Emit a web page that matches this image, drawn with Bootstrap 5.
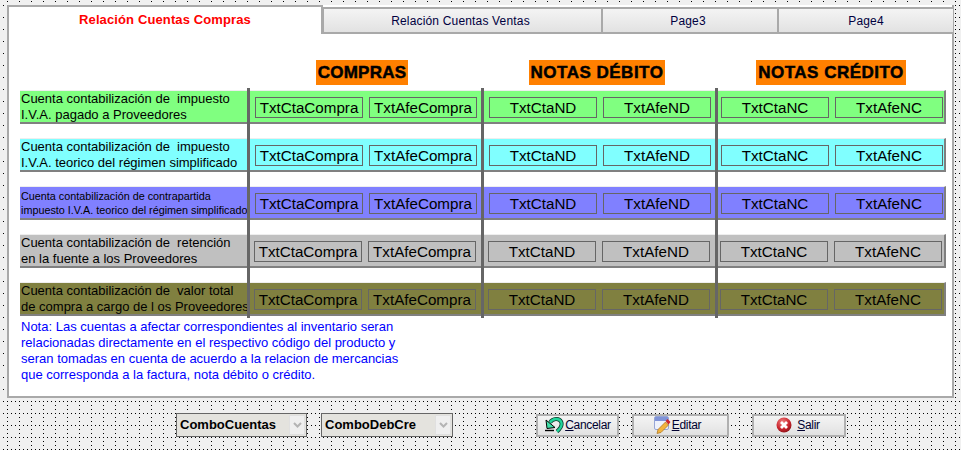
<!DOCTYPE html>
<html lang="es">
<head>
<meta charset="utf-8">
<title>Relación Cuentas</title>
<link href="https://cdn.jsdelivr.net/npm/bootstrap@5.3.0/dist/css/bootstrap.min.css" rel="stylesheet">
<style>
html,body{margin:0;height:450px;overflow:hidden}
body{--d:radial-gradient(circle at .5px .5px,#000 .7px,transparent .7px);width:961px;font-family:"Liberation Sans",Arial,sans-serif;color:#000;background-color:#f0f0f0;
 background-image:var(--d),var(--d),var(--d),var(--d),var(--d);background-size:12px 12px;background-position:3px 5px,7px 5px,11px 5px,7px 1px,7px 9px;padding:5px 7px 0 7px}
.frm{height:393px;width:947px;background:#fff;border:2px solid #a9a9a9;border-top:0;position:relative}
.tabrow{height:29px;margin:0 -2px}
.tb{background:linear-gradient(#f4f4f4,#e2e2e2);margin-top:2px;border:2px solid #a9a9a9;border-left-width:1px;border-right-width:1px;font-size:12px;letter-spacing:.17px;color:#000040}
.tb-on{width:316px;background:#fff;border:2px solid #a9a9a9;border-bottom:0;color:#f00;font-weight:700;font-size:13px;letter-spacing:.12px;padding-top:3px}
.hdrs{margin:26px 0 0 0;height:25px}
.hd{background:#ff8000;font-weight:700;font-size:17px;line-height:25px;padding:0 2px;letter-spacing:.5px;-webkit-text-stroke:.5px #000}
.hd-c{letter-spacing:.25px;padding:0 1.500px}
.gridwrap{position:relative;margin:3px 0 0 11px;width:926px;height:230px;padding-top:2px}
.sep{position:absolute;top:0;width:3px;height:230px;background:#666}
.rw{height:34px;margin-bottom:14px;border-top:1px solid #eee;border-right:2px solid #808080;border-bottom:2px solid #808080;padding-top:1px}
.rw:last-child{margin-bottom:0}
.lbl{width:235px;font-size:13px;line-height:16px;padding-left:1px;white-space:pre;flex:none}
.lbl-sm{font-size:10.8px;line-height:14px}
.lbl-b{width:234px}
.grp{flex:none;gap:6px}
.g1{width:234px}
.g2{width:232px}
.tx{width:108px;height:21px;border:1px solid #666;font-size:15.2px;line-height:19px;text-align:center;white-space:nowrap;overflow:hidden}
.c1{background:#80ff80}.c2{background:#80ffff}.c3{background:#8080ff}.c4{background:silver}.c5{background:#808040}
.nota{color:#00f;font-size:13px;line-height:16px;margin:1px 0 0 12px;white-space:pre}
.bar{height:52px;padding-top:2px}
.cmb{height:24px;border:1px solid #666;background:#e4e3de;font-weight:700;font-size:13px;padding-left:3px;color:#000}
.cmb-a{width:131px;margin-left:169px}
.cmb-b{width:132px;margin-left:14px}
.arr{width:16px;height:20px;margin-right:1px;background:#efefef;border:1px solid #e0e0e0}
.bt{height:23px;background:linear-gradient(#f4f4f4,#e2e2e2);border:2px solid #b0b0b0;font-size:12px;color:#000030;gap:1px;letter-spacing:-.3px}
.b1{width:83px;margin-left:83px}
.b2{width:97px;margin-left:13px;padding-right:6px}
.b3{width:94px;margin-left:23px;padding-right:2px}
</style>
</head>
<body>
<div class="frm">
 <div class="tabrow d-flex">
  <div class="tb-on text-center">Relación Cuentas Compras</div>
  <div class="tb d-flex align-items-center justify-content-center pe-1" style="width:279px">Relación Cuentas Ventas</div>
  <div class="tb d-flex align-items-center justify-content-center pe-1" style="width:176px">Page3</div>
  <div class="tb d-flex align-items-center justify-content-center" style="width:176px">Page4</div>
 </div>
 <div class="hdrs d-flex">
  <div class="d-flex justify-content-center" style="width:469px;padding-left:237px"><span class="hd hd-c">COMPRAS</span></div>
  <div class="d-flex justify-content-center" style="width:238px"><span class="hd">NOTAS DÉBITO</span></div>
  <div class="d-flex justify-content-center" style="width:230px"><span class="hd">NOTAS CRÉDITO</span></div>
 </div>
 <div class="gridwrap">
  <div class="sep" style="left:227px"></div>
  <div class="sep" style="left:461px"></div>
  <div class="sep" style="left:695px"></div>
  <div class="rw d-flex align-items-center c1">
   <div class="lbl">Cuenta contabilización de  impuesto
I.V.A. pagado a Proveedores</div>
   <div class="grp g1 d-flex"><div class="tx">TxtCtaCompra</div><div class="tx">TxtAfeCompra</div></div>
   <div class="grp g2 d-flex"><div class="tx">TxtCtaND</div><div class="tx">TxtAfeND</div></div>
   <div class="grp d-flex"><div class="tx">TxtCtaNC</div><div class="tx">TxtAfeNC</div></div>
  </div>
  <div class="rw d-flex align-items-center c2">
   <div class="lbl">Cuenta contabilización de  impuesto
I.V.A. teorico del régimen simplificado</div>
   <div class="grp g1 d-flex"><div class="tx">TxtCtaCompra</div><div class="tx">TxtAfeCompra</div></div>
   <div class="grp g2 d-flex"><div class="tx">TxtCtaND</div><div class="tx">TxtAfeND</div></div>
   <div class="grp d-flex"><div class="tx">TxtCtaNC</div><div class="tx">TxtAfeNC</div></div>
  </div>
  <div class="rw d-flex align-items-center c3">
   <div class="lbl lbl-sm">Cuenta contabilización de contrapartida
impuesto I.V.A. teorico del régimen simplificado</div>
   <div class="grp g1 d-flex"><div class="tx">TxtCtaCompra</div><div class="tx">TxtAfeCompra</div></div>
   <div class="grp g2 d-flex"><div class="tx">TxtCtaND</div><div class="tx">TxtAfeND</div></div>
   <div class="grp d-flex"><div class="tx">TxtCtaNC</div><div class="tx">TxtAfeNC</div></div>
  </div>
  <div class="rw d-flex align-items-center c4">
   <div class="lbl lbl-b">Cuenta contabilización de  retención
en la fuente a los Proveedores</div>
   <div class="grp g1 d-flex"><div class="tx">TxtCtaCompra</div><div class="tx">TxtAfeCompra</div></div>
   <div class="grp g2 d-flex"><div class="tx">TxtCtaND</div><div class="tx">TxtAfeND</div></div>
   <div class="grp d-flex"><div class="tx">TxtCtaNC</div><div class="tx">TxtAfeNC</div></div>
  </div>
  <div class="rw d-flex align-items-center c5">
   <div class="lbl lbl-b">Cuenta contabilización de  valor total
de compra a cargo de l os Proveedores</div>
   <div class="grp g1 d-flex"><div class="tx">TxtCtaCompra</div><div class="tx">TxtAfeCompra</div></div>
   <div class="grp g2 d-flex"><div class="tx">TxtCtaND</div><div class="tx">TxtAfeND</div></div>
   <div class="grp d-flex"><div class="tx">TxtCtaNC</div><div class="tx">TxtAfeNC</div></div>
  </div>
 </div>
 <div class="nota">Nota: Las cuentas a afectar correspondientes al inventario seran
relacionadas directamente en el respectivo código del producto y
seran tomadas en cuenta de acuerdo a la relacion de mercancias
que corresponda a la factura, nota débito o crédito.</div>
</div>
<div class="bar d-flex align-items-center">
 <div class="cmb cmb-a d-flex align-items-center justify-content-between">ComboCuentas<span class="arr d-flex align-items-center justify-content-center"><svg width="9" height="6" viewBox="0 0 9 6"><path d="M1 1l3.5 3.5L8 1" fill="none" stroke="#b4b4b4" stroke-width="2"/></svg></span></div>
 <div class="cmb cmb-b d-flex align-items-center justify-content-between">ComboDebCre<span class="arr d-flex align-items-center justify-content-center"><svg width="9" height="6" viewBox="0 0 9 6"><path d="M1 1l3.5 3.5L8 1" fill="none" stroke="#b4b4b4" stroke-width="2"/></svg></span></div>
 <div class="bt b1 d-flex align-items-center justify-content-center">
  <svg width="20" height="16" viewBox="0 0 20 16"><path d="M6 5.5C9 1 15 1 17 4.5c1.500 3-.5 7-4 10" fill="none" stroke="#0b3d2c" stroke-width="4"/><path d="M6 5.5C9 1 15 1 17 4.5c1.500 3-.5 7-4 10" fill="none" stroke="#21d49a" stroke-width="2.400"/><path d="M2 3l1 8.500 8-1z" fill="#3fe0a8" stroke="#000" stroke-width="1"/><path d="M1 13.500h9" stroke="#000" stroke-width="1.400"/></svg><span><u>C</u>ancelar</span></div>
 <div class="bt b2 d-flex align-items-center justify-content-center">
  <svg width="17" height="18" viewBox="0 0 17 18"><rect x="0.5" y="0.5" width="14" height="13" rx="1.500" fill="#eef1fb" stroke="#97a6d6"/><rect x="1" y="1" width="13" height="4" fill="#7f93d8"/><path d="M3 17.500l1-4 7.500-7.500 3 3-7.500 7.500z" fill="#f2b33d" stroke="#a8701c" stroke-width=".7"/><path d="M11.500 5l2-2 3 3-2 2.500z" fill="#d0242c"/></svg><span><u>E</u>ditar</span></div>
 <div class="bt b3 d-flex align-items-center justify-content-center">
  <svg width="16" height="16" viewBox="0 0 16 16"><defs><radialGradient id="rg" cx=".4" cy=".3" r=".8"><stop offset="0" stop-color="#f0807f"/><stop offset=".6" stop-color="#c8232c"/><stop offset="1" stop-color="#7d1016"/></radialGradient></defs><circle cx="8" cy="8" r="7.500" fill="url(#rg)"/><path d="M5 5l6 6M11 5l-6 6" stroke="#fff" stroke-width="2.800"/></svg><span class="ms-1"><u>S</u>alir</span></div>
</div>
</body>
</html>
